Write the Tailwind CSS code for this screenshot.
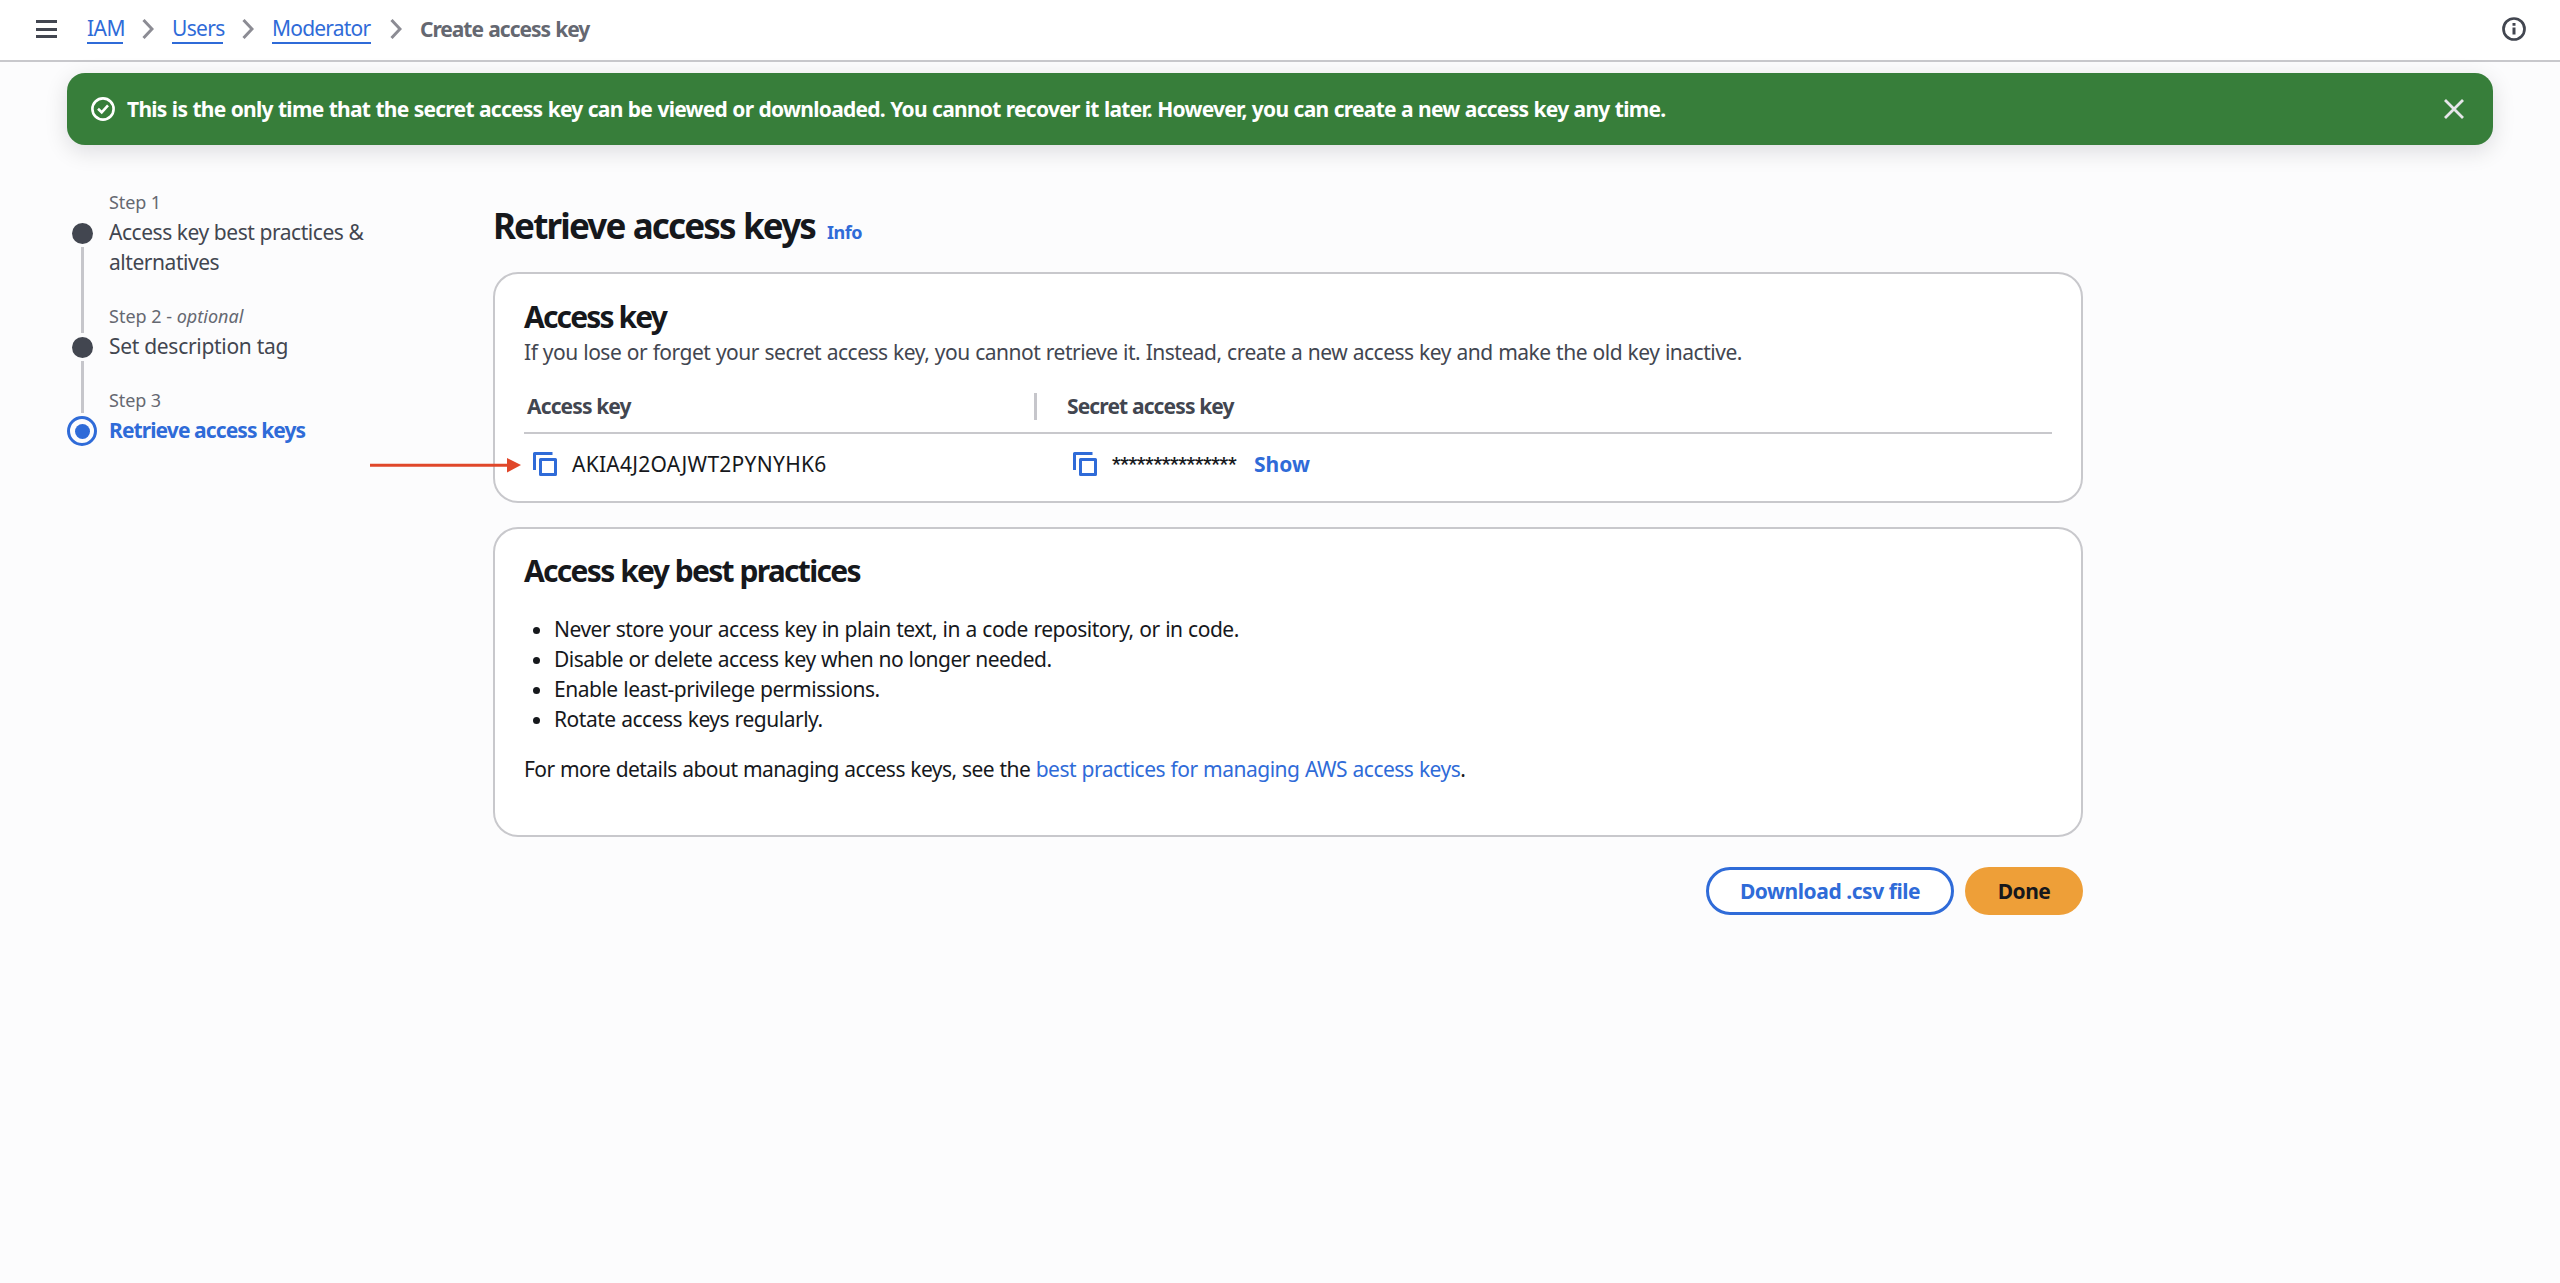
<!DOCTYPE html>
<html lang="en">
<head>
  <meta charset="UTF-8" />
  <meta name="viewport" content="width=device-width, initial-scale=1.0" />
  <title>Create access key | IAM</title>
  <script src="https://cdn.jsdelivr.net/npm/@tailwindcss/browser@4"></script>
</head>

<body class="bg-[#fcfcfd] text-[#16181c] font-['Noto_Sans','Open_Sans',sans-serif] text-[21px] leading-[30px] tracking-[-0.4px] min-h-screen">
  <header class="h-[62px] bg-white border-b-2 border-[#c8c8cc] flex items-center justify-between pl-[36px] pr-[34px] pb-[2px]">
    <div class="flex items-center">
      <button class="w-[21px] h-[18px] flex flex-col justify-between" aria-label="Open navigation">
        <span class="block w-full h-[3px] bg-[#424650]"></span>
        <span class="block w-full h-[3px] bg-[#424650]"></span>
        <span class="block w-full h-[3px] bg-[#424650]"></span>
      </button>
      <nav class="flex items-center ml-[30px] text-[#2f6bd8]">
        <a href="#" class="w-[36px] leading-[28px] border-b-2 border-[#2f6bd8] tracking-[-0.5px] whitespace-nowrap">IAM</a>
        <svg class="w-[12px] h-[20px] ml-[19px] mr-[18px]" viewBox="0 0 12 20" fill="none" stroke="#8c8c94" stroke-width="3"><path d="M1.5 1l8.5 9-8.5 9" /></svg>
        <a href="#" class="w-[51px] leading-[28px] border-b-2 border-[#2f6bd8] tracking-[-0.7px] whitespace-nowrap">Users</a>
        <svg class="w-[12px] h-[20px] ml-[19px] mr-[18px]" viewBox="0 0 12 20" fill="none" stroke="#8c8c94" stroke-width="3"><path d="M1.5 1l8.5 9-8.5 9" /></svg>
        <a href="#" class="w-[99px] leading-[28px] border-b-2 border-[#2f6bd8] tracking-[-0.8px] whitespace-nowrap">Moderator</a>
        <svg class="w-[12px] h-[20px] ml-[19px] mr-[18px]" viewBox="0 0 12 20" fill="none" stroke="#8c8c94" stroke-width="3"><path d="M1.5 1l8.5 9-8.5 9" /></svg>
        <span class="font-bold tracking-[-1.05px] [word-spacing:1px] text-[#656871] whitespace-nowrap">Create access key</span>
      </nav>
    </div>
    <svg class="w-[24px] h-[24px]" viewBox="0 0 24 24" fill="none" stroke="#424650" stroke-width="2.7">
      <circle cx="12" cy="12" r="10.5" />
      <path d="M12 10.5v7M12 6v2.8" stroke-width="3" />
    </svg>
  </header>

  <main class="px-[67px] pt-[11px]">
    <div class="h-[72px] rounded-[18px] bg-[#377e3a] text-white shadow-[0_6px_22px_1px_rgba(0,7,22,0.12)] flex items-center pl-[24px] pr-[29px]">
      <svg class="w-[24px] h-[24px]" viewBox="0 0 24 24" fill="none" stroke="currentColor" stroke-width="2.6">
        <circle cx="12" cy="12" r="10.6" />
        <path d="M7 11.8l3.7 3.5L17 8.3" />
      </svg>
      <p class="ml-[12px] font-bold tracking-[-0.74px] [word-spacing:0.5px] whitespace-nowrap">This is the only time that the secret access key can be viewed or downloaded. You cannot recover it later. However, you can create a new access key any time.</p>
      <button class="ml-auto" aria-label="Dismiss">
        <svg class="w-[20px] h-[20px]" viewBox="0 0 20 20" fill="none" stroke="#e6e6ea" stroke-width="2.8"><path d="M1 1l18 18M19 1L1 19" /></svg>
      </button>
    </div>

    <div class="flex">
      <!-- wizard steps -->
      <ol class="w-[426px] pt-[45px] text-[#424650]">
        <li class="flex">
          <div class="w-[30px] pt-[33px] flex flex-col items-center">
            <span class="w-[21px] h-[21px] shrink-0 rounded-full bg-[#424650]"></span>
            <span class="w-[3px] flex-1 mt-[3px] -mb-[29px] bg-[#c6c6cb]"></span>
          </div>
          <div class="ml-[12px] pb-[27px]">
            <p class="text-lg leading-[24px] tracking-[-0.1px] text-[#656871]">Step 1</p>
            <p class="mt-[3px] tracking-[-0.45px]">Access key best practices &amp;<br />alternatives</p>
          </div>
        </li>
        <li class="flex">
          <div class="w-[30px] pt-[33px] flex flex-col items-center">
            <span class="w-[21px] h-[21px] shrink-0 rounded-full bg-[#424650]"></span>
            <span class="w-[3px] flex-1 mt-[3px] -mb-[25px] bg-[#c6c6cb]"></span>
          </div>
          <div class="ml-[12px] pb-[27px]">
            <p class="text-lg leading-[24px] tracking-normal text-[#656871]">Step 2 - <i>optional</i></p>
            <p class="mt-[3px] tracking-[-0.3px]">Set description tag</p>
          </div>
        </li>
        <li class="flex">
          <div class="w-[30px] pt-[28px]">
            <span class="w-[30px] h-[30px] rounded-full border-3 border-[#2f6bd8] flex items-center justify-center">
              <span class="w-[15px] h-[15px] rounded-full bg-[#2f6bd8]"></span>
            </span>
          </div>
          <div class="ml-[12px]">
            <p class="text-lg leading-[24px] tracking-[-0.1px] text-[#656871]">Step 3</p>
            <p class="mt-[3px] font-bold tracking-[-0.9px] text-[#2f6bd8]">Retrieve access keys</p>
          </div>
        </li>
      </ol>

      <div class="w-[1590px] pt-[60px]">
        <div class="flex items-baseline">
          <h1 class="text-[35px] leading-[42px] font-bold tracking-[-1.85px] [word-spacing:1px]">Retrieve access keys</h1>
          <a href="#" class="ml-[12px] text-lg leading-[24px] font-bold tracking-[-0.5px] text-[#2f6bd8]">Info</a>
        </div>

        <section class="mt-[25px] bg-white border-2 border-[#c8c8cc] rounded-[25px] px-[29px] pt-[25px] pb-[22px]">
          <h2 class="text-3xl leading-[36px] font-bold tracking-[-1.85px]">Access key</h2>
          <p class="mt-[2px] tracking-[-0.49px] [word-spacing:0.5px] text-[#424650]">If you lose or forget your secret access key, you cannot retrieve it. Instead, create a new access key and make the old key inactive.</p>

          <div class="mt-[24px] pb-[11px] pl-[3px] border-b-2 border-[#c8c8cc] flex items-center font-bold tracking-[-0.87px] text-[#424650]">
            <div class="w-[507px]">Access key</div>
            <div class="w-[3px] h-[27px] bg-[#c6c6cb]"></div>
            <div class="ml-[30px]">Secret access key</div>
          </div>

          <div class="mt-[15px] flex items-center">
            <div class="w-[539px] pl-[9px] flex items-center relative">
              <svg class="absolute left-[-154px] top-[8px] w-[151px] h-[16px]" viewBox="0 0 151 16" fill="#e0472a">
                <path d="M0 6.8h138v3H0z" />
                <path d="M137 1l14 7-14 7.5z" />
              </svg>
              <svg class="w-[24px] h-[24px]" viewBox="0 0 24 24" fill="none" stroke="#2f6bd8" stroke-width="3" stroke-linejoin="round">
                <path d="M1.5 18V1.5H19.5" />
                <path d="M7.5 7.5h15v15h-15z" />
              </svg>
              <span class="ml-[15px] tracking-[0.27px]">AKIA4J2OAJWT2PYNYHK6</span>
            </div>
            <div class="pl-[10px] flex items-center">
              <svg class="w-[24px] h-[24px]" viewBox="0 0 24 24" fill="none" stroke="#2f6bd8" stroke-width="3" stroke-linejoin="round">
                <path d="M1.5 18V1.5H19.5" />
                <path d="M7.5 7.5h15v15h-15z" />
              </svg>
              <span class="ml-[15px] w-[127px] font-[Roboto] text-[19px] font-bold tracking-[-0.35px]">***************</span>
              <a href="#" class="ml-[15px] font-bold tracking-normal text-[#2f6bd8]">Show</a>
            </div>
          </div>
        </section>

        <section class="mt-[24px] bg-white border-2 border-[#c8c8cc] rounded-[25px] px-[29px] pt-[24px] pb-[51px]">
          <h2 class="text-3xl leading-[36px] font-bold tracking-[-1.7px] [word-spacing:0.5px]">Access key best practices</h2>
          <ul class="mt-[25px] pl-[30px] list-disc tracking-[-0.48px] [word-spacing:0.5px]">
            <li>Never store your access key in plain text, in a code repository, or in code.</li>
            <li class="tracking-[-0.54px]">Disable or delete access key when no longer needed.</li>
            <li>Enable least-privilege permissions.</li>
            <li>Rotate access keys regularly.</li>
          </ul>
          <p class="mt-[20px] tracking-[-0.55px] [word-spacing:0.5px]">For more details about managing access keys, see the <a href="#" class="tracking-[-0.5px] text-[#2f6bd8]">best practices for managing AWS access keys</a>.</p>
        </section>

        <div class="mt-[30px] flex justify-end gap-[11px] font-bold">
          <button class="w-[248px] h-[48px] rounded-full bg-white border-3 border-[#2f6bd8] text-[#2f6bd8] tracking-[-0.45px]">Download .csv file</button>
          <button class="w-[118px] h-[48px] rounded-full bg-[#ee9f38] tracking-[-0.5px]">Done</button>
        </div>
      </div>
    </div>
  </main>
</body>
</html>
